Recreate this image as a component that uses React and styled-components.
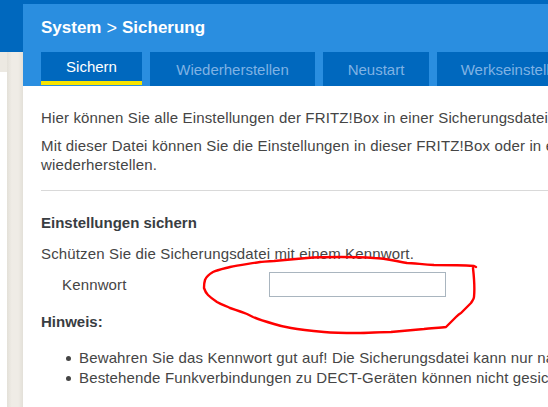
import React from 'react';
import styled, { createGlobalStyle } from 'styled-components';

const GlobalStyle = createGlobalStyle`
  html, body {
    margin: 0;
    padding: 0;
    background: #ffffff;
  }
  body {
    font-family: "Liberation Sans", Arial, sans-serif;
  }
`;

const Page = styled.div`
  position: relative;
  display: flex;
  width: 548px;
  height: 407px;
  overflow: hidden;
  background: #0068be;
`;

const Sidebar = styled.div`
  flex: 0 0 23px;
  display: flex;
  flex-direction: column;
`;

const SideTop = styled.div`
  height: 52px;
`;

const SideBody = styled.div`
  flex: 1;
  display: flex;
  background: #ece9e2;
`;

const Gutter = styled.div`
  flex: 0 0 7px;
  margin-top: 20px;
  background: #ffffff;
`;

const Rail = styled.div`
  flex: 1;
  background: linear-gradient(90deg, #e3e0d8 0%, #efece6 30%, #efece6 70%, #e3e0d8 100%);
`;

const Main = styled.div`
  flex: 1;
  min-width: 0;
  display: flex;
  flex-direction: column;
  padding-top: 4px;
`;

const Header = styled.div`
  background: #2a8ee0;
  padding-left: 18px;
`;

const Title = styled.h1`
  margin: 0;
  height: 48px;
  display: flex;
  align-items: center;
  gap: 5px;
  color: #ffffff;
  font-size: 17px;
  font-weight: bold;
`;

const Chevron = styled.span`
  font-weight: normal;
  font-size: 18px;
`;

const Tabs = styled.div`
  display: flex;
  gap: 8px;
  height: 34px;
  white-space: nowrap;
`;

const Tab = styled.div`
  flex: 0 0 ${(p) => p.$w}px;
  box-sizing: border-box;
  height: ${(p) => (p.$active ? 33 : 34)}px;
  display: flex;
  align-items: center;
  justify-content: center;
  background: #0068be;
  border-bottom: ${(p) => (p.$active ? '4px solid #f7e400' : 'none')};
  color: ${(p) => (p.$active ? '#ffffff' : '#7fb2e4')};
  font-size: 15px;
`;

const Content = styled.div`
  flex: 1;
  background: #ffffff;
  padding: 22px 0 0 18px;
  color: #454545;
  font-size: 15px;
  line-height: 19px;
  letter-spacing: 0.15px;
  white-space: nowrap;
`;

const Intro = styled.p`
  margin: 0 0 ${(p) => p.$gap}px;
`;

const Rule = styled.hr`
  border: none;
  border-top: 1px solid #d9d9d9;
  margin: 16px 0 0;
`;

const Heading = styled.h2`
  margin: ${(p) => p.$top}px 0 0;
  color: #393d42;
  font-size: 15px;
  font-weight: bold;
  line-height: 19px;
  letter-spacing: 0;
`;

const Text = styled.p`
  margin: 12px 0 0;
`;

const FieldRow = styled.div`
  display: flex;
  align-items: center;
  margin-top: 9px;
  padding-left: 21px;
`;

const Label = styled.label`
  flex: 0 0 207px;
`;

const Input = styled.input`
  box-sizing: border-box;
  width: 177px;
  height: 25px;
  border: 1px solid #a9b5bf;
  margin: 0;
  padding: 2px 4px;
  font: inherit;
`;

const List = styled.ul`
  list-style: none;
  margin: 17px 0 0;
  padding: 0 0 0 38px;
`;

const Item = styled.li`
  position: relative;
  line-height: 20px;

  &::before {
    content: '';
    position: absolute;
    left: -13px;
    top: 8px;
    width: 5px;
    height: 5px;
    border-radius: 50%;
    background: #454545;
  }
`;

const Scribble = styled.svg`
  position: absolute;
  left: 0;
  top: 0;
  pointer-events: none;
`;

const tabs = [
  { label: 'Sichern', w: 101, active: true },
  { label: 'Wiederherstellen', w: 165 },
  { label: 'Neustart', w: 106 },
  { label: 'Werkseinstellungen', w: 178 },
];

const App = () => {
  return (
    <Page>
      <GlobalStyle />
      <Sidebar>
        <SideTop />
        <SideBody>
          <Gutter />
          <Rail />
        </SideBody>
      </Sidebar>
      <Main>
        <Header>
          <Title>
            System <Chevron>&gt;</Chevron> Sicherung
          </Title>
          <Tabs>
            {tabs.map((t) => (
              <Tab key={t.label} $w={t.w} $active={t.active}>
                {t.label}
              </Tab>
            ))}
          </Tabs>
        </Header>
        <Content>
          <Intro $gap={9}>
            Hier können Sie alle Einstellungen der FRITZ!Box in einer Sicherungsdatei auf Ihrem Computer speichern.
          </Intro>
          <Intro $gap={0}>
            Mit dieser Datei können Sie die Einstellungen in dieser FRITZ!Box oder in einer anderen FRITZ!Box
            <br />
            wiederherstellen.
          </Intro>
          <Rule />
          <Heading $top={22}>Einstellungen sichern</Heading>
          <Text>Schützen Sie die Sicherungsdatei mit einem Kennwort.</Text>
          <FieldRow>
            <Label>Kennwort</Label>
            <Input type="password" />
          </FieldRow>
          <Heading $top={15}>Hinweis:</Heading>
          <List>
            <Item>Bewahren Sie das Kennwort gut auf! Die Sicherungsdatei kann nur nach Eingabe dieses Kennworts wiederhergestellt werden.</Item>
            <Item>Bestehende Funkverbindungen zu DECT-Geräten können nicht gesichert werden.</Item>
          </List>
        </Content>
      </Main>
      <Scribble width="548" height="407" viewBox="0 0 548 407">
        <path
          d="M476 267 L474 266 C460 265 440 265 434 265 C420 264 412 263 407 263 C395 261 385 258 374 258 C360 257 350 257 341 257 C330 257 318 257 307 258 C295 259 285 260 274 261 C268 261 263 262 260 262 C248 264 238 265 230 267 C222 269 217 270 213 272 C208 275 206 277 205 280 C204 283 204 286 204 288 C205 291 206 293 208 295 C211 298 214 300 217 302 C222 305 226 306 230 308 C236 310 242 312 247 314 C249 315 251 316 253 317 C260 320 267 322 274 324 C280 326 285 327 291 328 C302 330 313 331 324 332 C335 333 346 333 357 333 C368 333 380 332 391 332 C402 331 413 330 424 329 C432 328 440 328 446 327 C450 323 453 320 456 317 C458 315 459 314 461 313 C465 309 468 306 471 303 C473 300 474 299 474 297 C475 287 474 277 473 268"
          fill="none"
          stroke="#ff0000"
          strokeWidth="2.4"
          strokeLinecap="round"
          strokeLinejoin="round"
        />
      </Scribble>
    </Page>
  );
};

export default App;
